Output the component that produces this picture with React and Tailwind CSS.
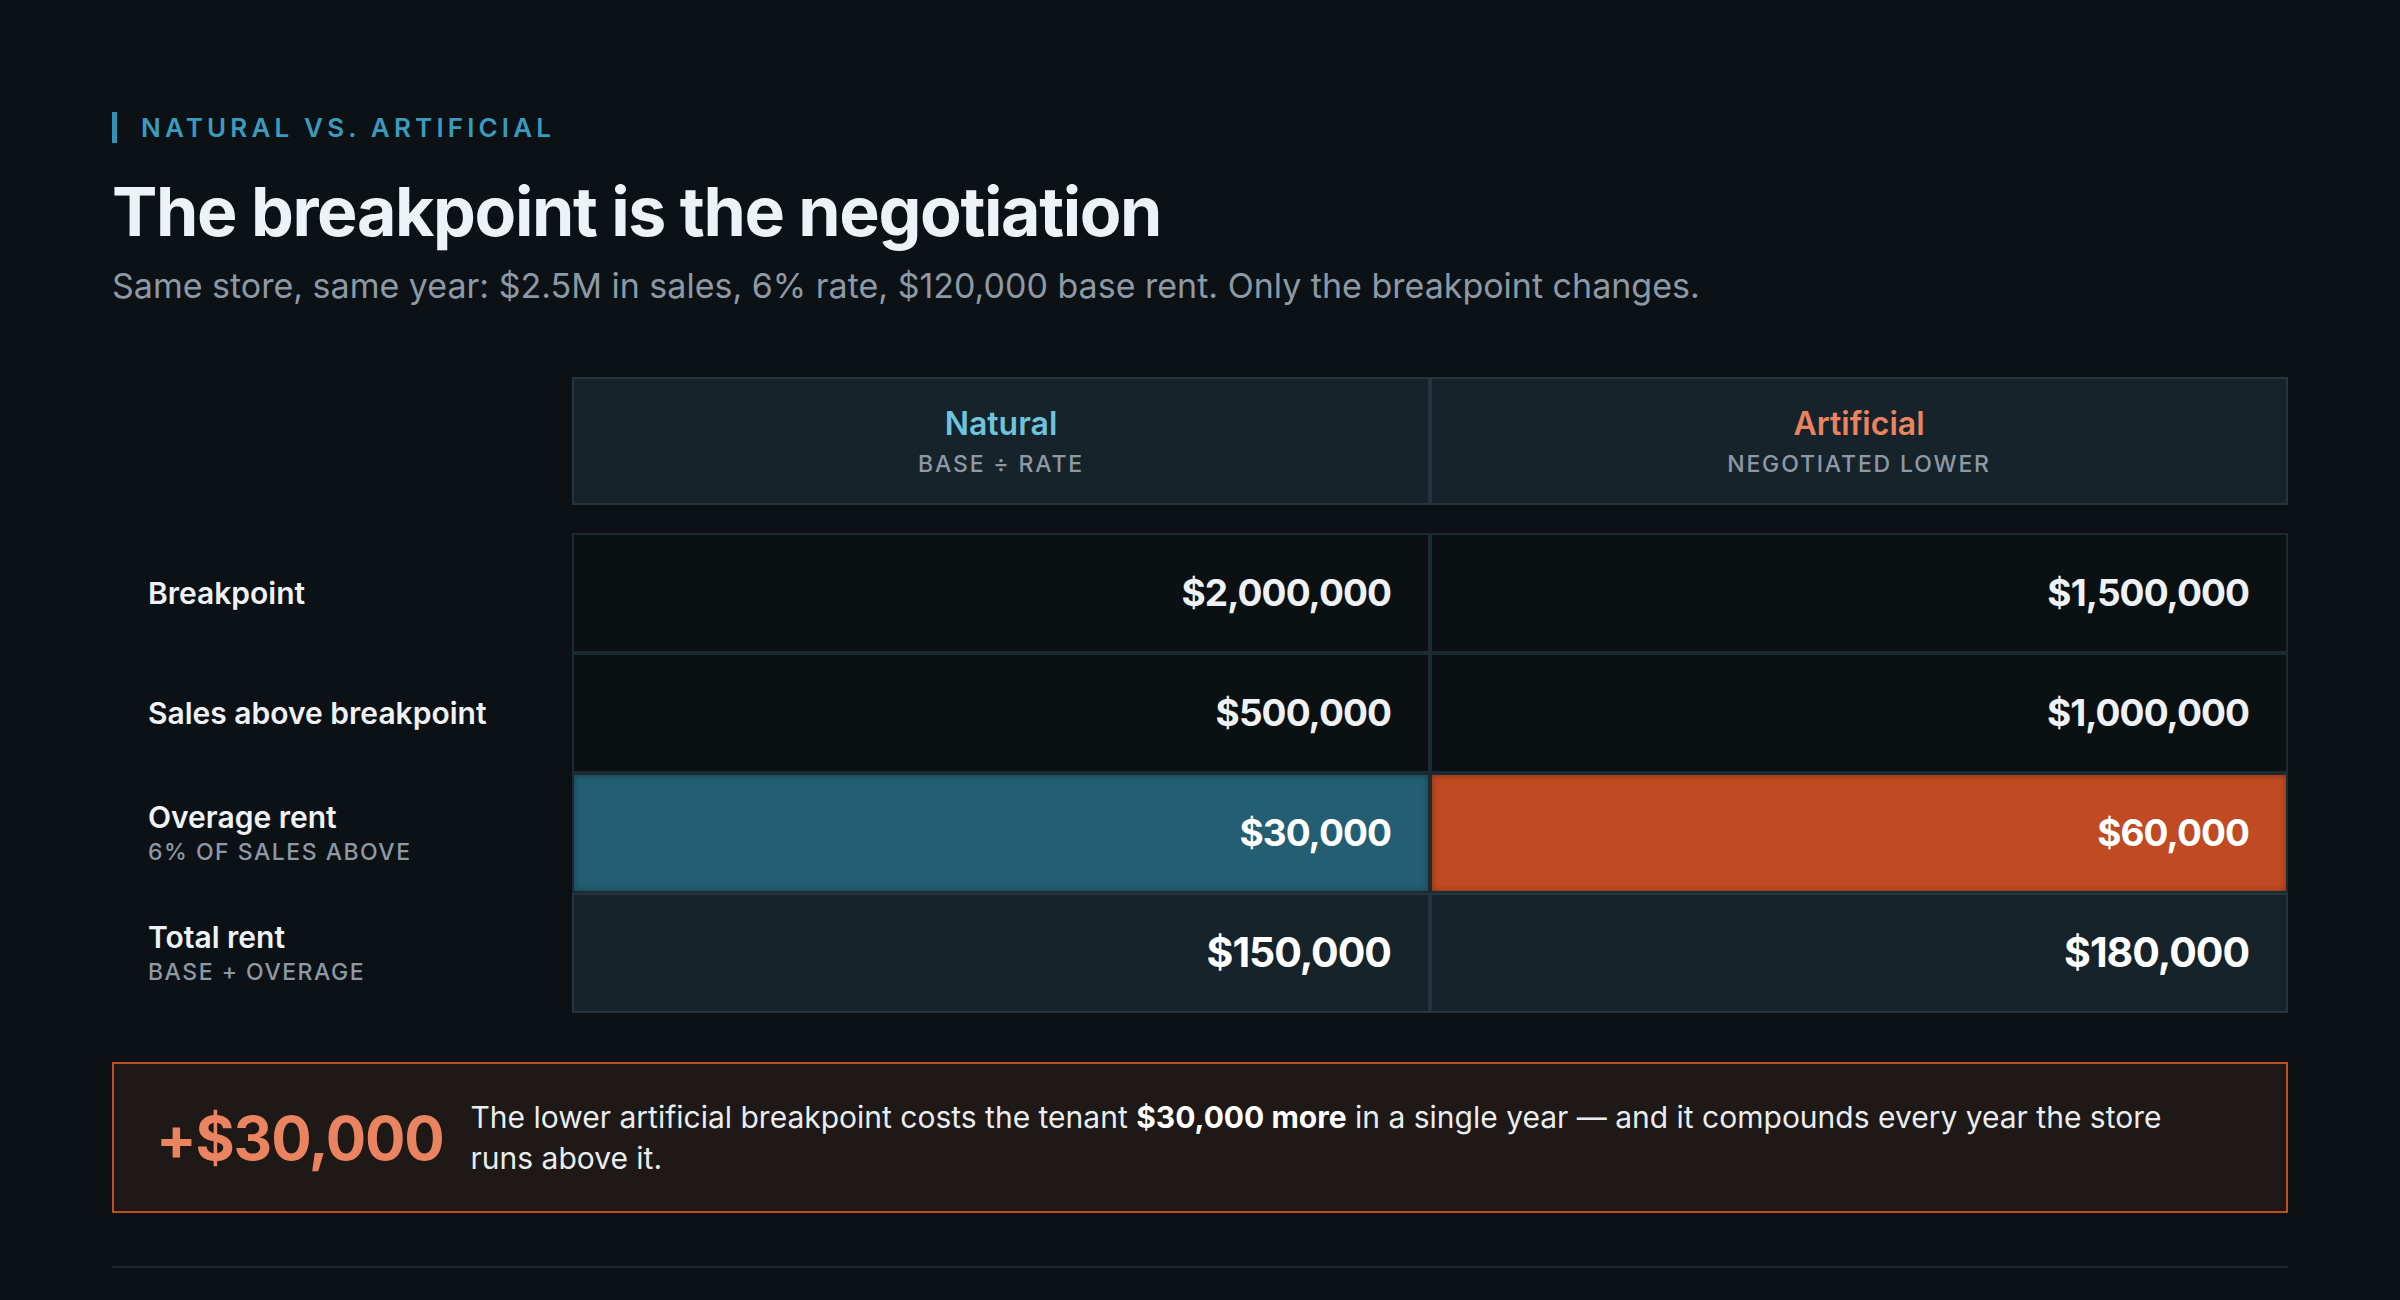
import React from 'react';

const rows = [
  { label: 'Breakpoint', natural: '$2,000,000', artificial: '$1,500,000', kind: 'plain' },
  { label: 'Sales above breakpoint', natural: '$500,000', artificial: '$1,000,000', kind: 'plain' },
  { label: 'Overage rent', sub: '6% of sales above', natural: '$30,000', artificial: '$60,000', kind: 'accent' },
  { label: 'Total rent', sub: 'Base + overage', natural: '$150,000', artificial: '$180,000', kind: 'total' },
];

const Cell = ({ children, className }) => (
  <div className={`h-[120px] border-2 flex items-center justify-end pr-[37px] font-bold tracking-tight ${className}`}>
    {children}
  </div>
);

const App = () => {
  return (
    <div className="min-h-[1300px] bg-[#0c1115] font-['Inter','Noto_Sans',sans-serif] text-[#e6edf3]">
      <div className="px-28 pt-[112px] pb-8">
        {/* Eyebrow */}
        <div className="border-l-[5px] border-[#2f93b5] pl-[24px] text-[26px] leading-[31px] font-semibold tracking-[0.16em] text-[#3a9bbd] uppercase">
          Natural vs. Artificial
        </div>

        {/* Heading */}
        <h1 className="mt-[35px] text-[68px] leading-[66px] font-bold tracking-[-0.02em] text-[#edf2f6]">
          The breakpoint is the negotiation
        </h1>
        <p className="mt-[20px] text-[34px] leading-[44px] text-[#8d99a5]">
          Same store, same year: $2.5M in sales, 6% rate, $120,000 base rent. Only the breakpoint changes.
        </p>

        {/* Comparison table */}
        <div className="mt-[69px] grid grid-cols-[460px_1fr_1fr]">
          <div />
          <div className="h-[128px] border-2 border-[#25353f] bg-[#17232a] flex flex-col items-center justify-center">
            <div className="text-[32px] leading-[40px] font-semibold text-[#6ec4dc]">Natural</div>
            <div className="mt-[5px] text-[23px] leading-[30px] font-medium tracking-[0.08em] text-[#8d99a5]">BASE ÷ RATE</div>
          </div>
          <div className="h-[128px] border-2 border-[#25353f] bg-[#17232a] flex flex-col items-center justify-center">
            <div className="text-[32px] leading-[40px] font-semibold text-[#ea835f]">Artificial</div>
            <div className="mt-[5px] text-[23px] leading-[30px] font-medium tracking-[0.08em] text-[#8d99a5]">NEGOTIATED LOWER</div>
          </div>
        </div>

        <div className="mt-[28px] grid grid-cols-[460px_1fr_1fr]">
          {rows.map((r) => (
            <React.Fragment key={r.label}>
              <div className="h-[120px] pl-[36px] flex flex-col justify-center">
                <div className="text-[30px] leading-[38px] font-semibold text-[#eef2f5]">{r.label}</div>
                {r.sub && (
                  <div className="text-[23px] leading-[32px] font-medium tracking-[0.065em] uppercase text-[#8d99a5]">{r.sub}</div>
                )}
              </div>
              {r.kind === 'plain' && (
                <>
                  <Cell className="text-[37px] border-[#1c2a32] bg-[#0b1013] text-[#eef2f5]">{r.natural}</Cell>
                  <Cell className="text-[37px] border-[#1c2a32] bg-[#0b1013] text-[#eef2f5]">{r.artificial}</Cell>
                </>
              )}
              {r.kind === 'accent' && (
                <>
                  <Cell className="text-[37px] border-[#1c2a32] bg-[#245e73] text-white shadow-[inset_0_0_6px_rgba(0,0,0,0.35)]">{r.natural}</Cell>
                  <Cell className="text-[37px] border-[#1c2a32] bg-[#c04a21] text-white shadow-[inset_0_0_6px_rgba(0,0,0,0.35)]">{r.artificial}</Cell>
                </>
              )}
              {r.kind === 'total' && (
                <>
                  <Cell className="text-[41px] border-[#25353f] bg-[#17232a] text-white">{r.natural}</Cell>
                  <Cell className="text-[41px] border-[#25353f] bg-[#17232a] text-white">{r.artificial}</Cell>
                </>
              )}
            </React.Fragment>
          ))}
        </div>

        {/* Callout */}
        <div className="mt-[49px] h-[151px] border-2 border-[#c24d25] bg-[#1e1816] flex items-center gap-[27px] pl-[42px] pr-[46px]">
          <div className="text-[60px] leading-[72px] font-bold tracking-[-0.02em] text-[#ea835f] whitespace-nowrap">+$30,000</div>
          <p className="max-w-[1730px] text-[30px] leading-[41px] text-[#e9edf0]">
            The lower artificial breakpoint costs the tenant <strong className="font-bold text-white">$30,000 more</strong> in a single year — and it compounds every year the store runs above it.
          </p>
        </div>

        <div className="mt-[53px] h-[2px] bg-[#1c2630]" />
      </div>
    </div>
  );
};

export default App;
